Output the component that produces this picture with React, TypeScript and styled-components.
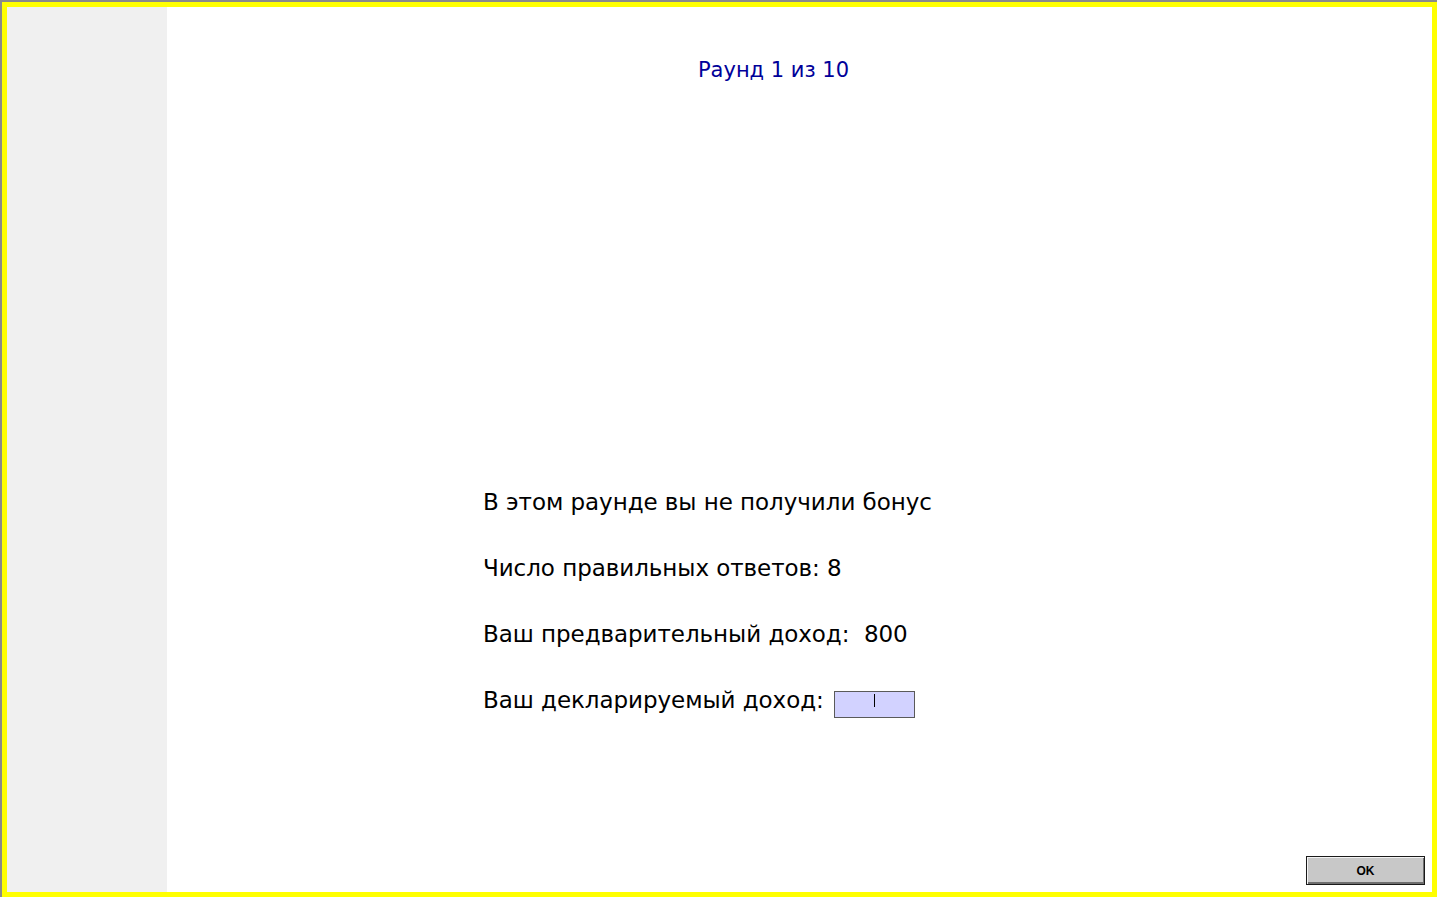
import React from "react";
import styled, { createGlobalStyle } from "styled-components";

const Global = createGlobalStyle`
  html, body { margin: 0; padding: 0; background: #ffffff; }
  body { width: 1440px; height: 900px; overflow: hidden; }
  #root { width: 1440px; height: 900px; }
`;

const Window = styled.div`
  box-sizing: border-box;
  width: 1437px;
  height: 897px;
  border-top: 2px solid #8a8a8a;
  border-left: 2px solid #8a8a8a;
  background: #ffffff;
`;

const Frame = styled.div`
  box-sizing: border-box;
  width: 100%;
  height: 100%;
  border: 5px solid #ffff00;
  display: flex;
`;

const SidePanel = styled.aside`
  width: 160px;
  flex: none;
  background: #f0f0f0;
`;

const Main = styled.main`
  flex: 1;
  display: flex;
  flex-direction: column;
  padding: 0 7px 7px 0;
  font-family: "DejaVu Sans", Tahoma, sans-serif;
`;

const Title = styled.h1`
  margin: 0;
  padding-top: 49px;
  width: 1213px;
  text-align: center;
  font-size: 21px;
  font-weight: normal;
  line-height: 28px;
  color: #000099;
`;

const Results = styled.section`
  margin-top: 402px;
  padding-left: 316px;
  display: flex;
  flex-direction: column;
  gap: 34px;
`;

const Line = styled.div`
  display: flex;
  align-items: center;
  height: 32px;
  font-size: 23px;
  letter-spacing: -0.05px;
  color: #000000;
  white-space: pre;
`;

const IncomeInput = styled.div`
  box-sizing: border-box;
  width: 81px;
  height: 27px;
  margin-left: 10px;
  margin-top: 8px;
  background: #d2d2ff;
  border: 1px solid #5a5a5a;
  display: flex;
  align-items: flex-start;
  justify-content: center;
  padding-top: 2px;
`;

const Caret = styled.span`
  width: 1px;
  height: 13px;
  background: #000000;
`;

const Footer = styled.div`
  margin-top: auto;
  display: flex;
  justify-content: flex-end;
`;

const OkButton = styled.button`
  box-sizing: border-box;
  width: 119px;
  height: 29px;
  padding: 0;
  background: #c8c8c8;
  border: 1px solid #1a1a1a;
  box-shadow: inset 1px 1px 0 #f4f4f4, inset -1px -2px 0 #6e6e6e;
  font-family: "Liberation Sans", Arial, sans-serif;
  font-weight: bold;
  font-size: 12px;
  color: #000000;
`;

export default function App() {
  return (
    <>
      <Global />
      <Window>
        <Frame>
          <SidePanel />
          <Main>
            <Title>Раунд 1 из 10</Title>
            <Results>
              <Line>В этом раунде вы не получили бонус</Line>
              <Line>Число правильных ответов: 8</Line>
              <Line>Ваш предварительный доход:  800</Line>
              <Line>
                Ваш декларируемый доход:
                <IncomeInput>
                  <Caret />
                </IncomeInput>
              </Line>
            </Results>
            <Footer>
              <OkButton>OK</OkButton>
            </Footer>
          </Main>
        </Frame>
      </Window>
    </>
  );
}
